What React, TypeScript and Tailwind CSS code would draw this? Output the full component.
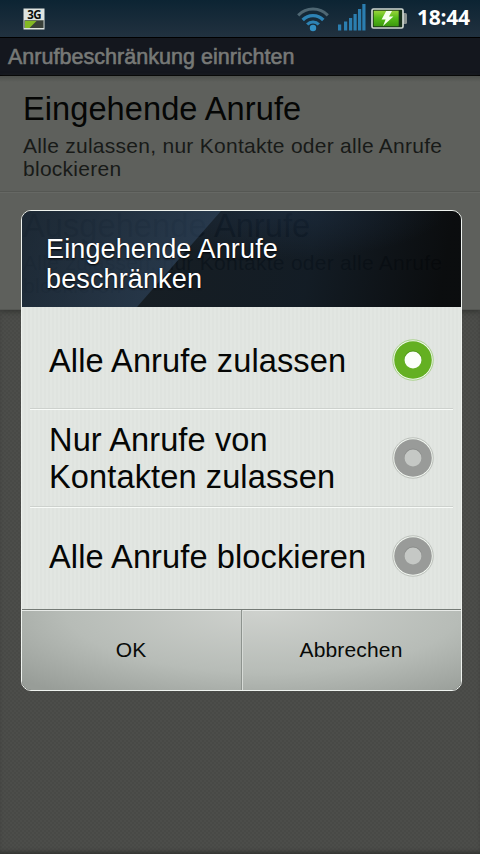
import React, { useState } from 'react';

interface CallSetting {
  title: string;
  summary: string;
}

interface RadioProps {
  checked: boolean;
}

const settings: CallSetting[] = [
  { title: 'Eingehende Anrufe', summary: 'Alle zulassen, nur Kontakte oder alle Anrufe blockieren' },
  { title: 'Ausgehende Anrufe', summary: 'Alle zulassen, nur Kontakte oder alle Anrufe blockieren' },
];

const options = ['Alle Anrufe zulassen', 'Nur Anrufe von Kontakten zulassen', 'Alle Anrufe blockieren'];

const NetworkIcon = () => (
  <svg width="22" height="22" viewBox="0 0 22 22" className="overflow-visible">
    <rect x="0.5" y="0.5" width="21" height="21" fill="#dfe4e0" />
    <path d="M2 12.5H20V20H2Z" fill="#394039" />
    <path d="M2 12.5H14L6.5 20H2Z" fill="#83b923" />
    <path d="M1.5 20V12.5H20.5V20" fill="none" stroke="#59615a" strokeWidth="0.7" />
    <text x="11.4" y="10.5" textAnchor="middle" fontSize="11.5" fontWeight="700" fontFamily="'Open Sans', sans-serif" fill="#0b0f0c" textLength="14.5">
      3G
    </text>
  </svg>
);

const WifiIcon = () => (
  <svg width="34" height="26" viewBox="0 0 34 26" fill="none" strokeWidth="3">
    <path d="M2.2 9.4A20.5 20.5 0 0 1 31.8 9.4" stroke="#4f6773" />
    <path d="M6.7 14A14.3 14.3 0 0 1 27.3 14" stroke="#2d83b5" strokeWidth="3.4" />
    <path d="M11.2 18.5A8 8 0 0 1 22.8 18.5" stroke="#2d83b5" strokeWidth="3.2" />
    <circle cx="17" cy="22" r="3.2" fill="#3390c4" />
  </svg>
);

const SignalIcon = () => (
  <svg width="28" height="27" viewBox="0 0 28 27" fill="#2b7eb0">
    <rect x="0" y="20.5" width="3.2" height="6" />
    <rect x="6" y="17.5" width="3.2" height="9" />
    <rect x="11" y="14" width="3.2" height="12.5" />
    <rect x="15.5" y="10" width="3.2" height="16.5" />
    <rect x="20" y="5" width="3.2" height="21.5" />
    <rect x="24.3" y="0" width="3.2" height="26.5" />
  </svg>
);

const BatteryIcon = () => (
  <svg width="37" height="21" viewBox="0 0 37 21">
    <defs>
      <linearGradient id="charge" x1="0" y1="0" x2="0" y2="1">
        <stop offset="0" stopColor="#9bd43c" />
        <stop offset="0.45" stopColor="#57bd19" />
        <stop offset="1" stopColor="#3b980f" />
      </linearGradient>
    </defs>
    <path d="M32 5H34.5Q36 5 36 6.5V14.5Q36 16 34.5 16H32Z" fill="#89918f" />
    <rect x="1" y="1" width="31" height="19" rx="1.5" fill="#17301b" stroke="#d0d7d2" strokeWidth="1.7" />
    <rect x="2.7" y="2.7" width="25" height="15.6" fill="url(#charge)" />
    <path d="M15.2 3H21L18 8.4H22.4L12 18L14.6 11.6H10.6Z" fill="#f7fff0" />
  </svg>
);

const Radio: React.FC<RadioProps> = ({ checked }) => (
  <svg width="42" height="42" viewBox="0 0 42 42" className="shrink-0">
    <circle cx="21" cy="21" r="20.2" fill="#f4f9f3" stroke={checked ? '#a5cf86' : '#b9bdb8'} strokeWidth="1" />
    <circle cx="21" cy="21" r="18.8" fill={checked ? '#64b022' : '#999b99'} />
    <circle cx="21" cy="20.2" r="8.7" fill={checked ? '#479313' : '#888a88'} />
    <circle cx="21" cy="21" r="8.5" fill={checked ? '#fbfffa' : '#c5c8c5'} />
  </svg>
);

const StatusBar = () => (
  <div className="flex h-[37px] items-center bg-gradient-to-b from-[#0c2433] to-[#21313f] pl-[23px] pr-[9px]">
    <NetworkIcon />
    <div className="ml-auto flex items-center">
      <WifiIcon />
      <div className="-mt-0.5 ml-2">
        <SignalIcon />
      </div>
      <div className="ml-[5px]">
        <BatteryIcon />
      </div>
      <span className="-mt-0.5 ml-[9px] w-[54px] whitespace-nowrap font-['Open_Sans',sans-serif] text-[21px] font-bold leading-none tracking-[-0.25px] text-white">
        18:44
      </span>
    </div>
  </div>
);

const App: React.FC = () => {
  const [selected, setSelected] = useState(0);
  const [isOpen, setIsOpen] = useState(true);

  return (
    <div className="relative flex h-[854px] w-[480px] flex-col overflow-hidden bg-[#4a4b48] font-['Liberation_Sans',Arial,sans-serif]">
      {/* Fine weave of the page background */}
      <div className="absolute inset-0 bg-[repeating-conic-gradient(#484946_0_25%,#4c4d4a_0_50%)] bg-[length:4px_4px] shadow-[inset_0_-4px_4px_-2px_#30322f]" />

      <div className="relative">
        <StatusBar />
        <div className="flex h-[39px] items-center border-y border-black bg-[#14171e] px-2 pt-[3px]">
          <h1 className="whitespace-nowrap text-[21.5px] leading-none tracking-[0.03px] text-[#777977] [-webkit-text-stroke:0.6px_#777977]">
            Anrufbeschränkung einrichten
          </h1>
        </div>
        <div className="bg-[#5e605c] bg-[linear-gradient(#4d504c,#5e605c_6px)] shadow-[0_2px_5px_#343633]">
          {settings.map((item) => (
            <div key={item.title} className="h-[117px] border-b border-[#666864] px-[23px] pt-3 shadow-[inset_0_-1px_#555753] last:border-b-0">
              <div className="whitespace-nowrap text-[32.6px] leading-[42px] tracking-[0.06px] text-[#050605]">{item.title}</div>
              <div className="mt-1 w-[430px] text-[21px] leading-[23px] tracking-[0.27px] text-[#181a18]">{item.summary}</div>
            </div>
          ))}
        </div>
      </div>

      {isOpen && (
        <div className="absolute left-[21px] top-[210px] flex h-[481px] w-[441px] flex-col overflow-hidden rounded-[10px] border border-[#eff3ef]">
          {/* Header */}
          <div className="relative h-24 shrink-0 bg-[linear-gradient(100deg,#0c141bde_25%,#0b151fe6_65%,#050709ee_95%)]">
            <svg width="439" height="96" viewBox="0 0 439 96" className="absolute inset-0">
              <defs>
                <linearGradient id="facet" x1="0" y1="0" x2="1" y2="0.2">
                  <stop offset="0" stopColor="#1f2d3b" />
                  <stop offset="1" stopColor="#30465f" />
                </linearGradient>
                <radialGradient id="glow" cx="0.45" cy="0" r="0.5">
                  <stop offset="0" stopColor="#22344b" stopOpacity="0.5" />
                  <stop offset="1" stopColor="#22344b" stopOpacity="0" />
                </radialGradient>
              </defs>
              <path d="M199 0H439V96H115Z" fill="url(#glow)" />
              <path d="M0 0H199L115 96H0Z" fill="url(#facet)" fillOpacity="0.7" />
            </svg>
            <h2 className="relative w-[300px] pl-6 pt-[23px] text-[27px] leading-[30px] tracking-[0.13px] text-white [text-shadow:0_1px_2px_#000]">
              Eingehende Anrufe beschränken
            </h2>
          </div>

          {/* Options */}
          <div className="flex h-[302px] shrink-0 flex-col bg-[#e0e4e0] bg-[repeating-linear-gradient(90deg,#e2e6e2_0_2px,#dfe3df_2px_4px)] px-2">
            {options.map((option, index) => (
              <button
                key={option}
                type="button"
                onClick={() => setSelected(index)}
                className="flex h-[98px] shrink-0 items-center justify-between border-b border-[#f8fbf8] pb-px pl-[19px] pr-[19px] text-left text-[32.6px] leading-[37px] tracking-[0.1px] text-[#050605] shadow-[inset_0_-1px_#cdd1cd] first:h-[103px] first:pb-0 first:pt-1 last:border-b-0 last:pb-0.5 last:shadow-none"
              >
                <span className="w-[330px]">{option}</span>
                <Radio checked={selected === index} />
              </button>
            ))}
          </div>

          {/* Buttons */}
          <div className="flex flex-1 border-t border-[#747a75] bg-[radial-gradient(ellipse_75%_130%_at_55%_0%,#cfd2ce_0%,#b7bcb7_60%,#989d98_100%)] text-[21px] tracking-[0.15px] text-[#080a08] shadow-[inset_0_1px_#e7eae7]">
            <button type="button" onClick={() => setIsOpen(false)} className="w-[220px] border-r border-[#8d938e] pr-px">
              OK
            </button>
            <button type="button" onClick={() => setIsOpen(false)} className="flex-1 border-l border-[#d7dbd7] pr-0.5">
              Abbrechen
            </button>
          </div>
        </div>
      )}
    </div>
  );
};

export default App;
